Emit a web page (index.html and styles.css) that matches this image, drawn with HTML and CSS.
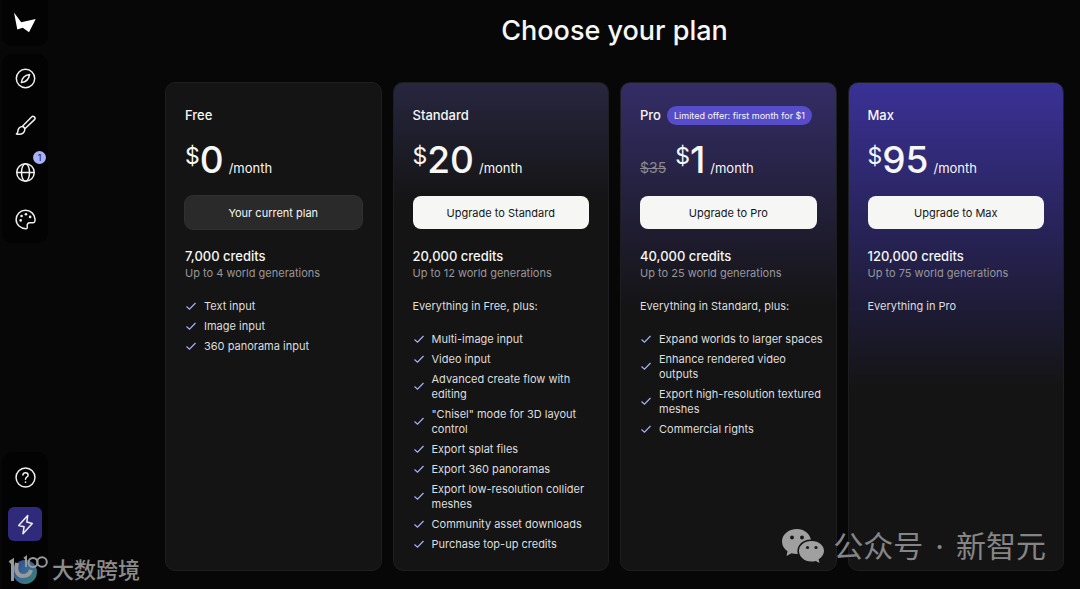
FILE: index.html
```html
<!DOCTYPE html>
<html lang="en">
<head>
    <meta charset="UTF-8">
    <meta name="viewport" content="width=device-width, initial-scale=1.0">
    <title>Choose your plan</title>
    <link rel="stylesheet" href="styles.css">
</head>
<body>

    <!-- shared check mark -->
    <svg class="sprite" aria-hidden="true">
        <symbol id="check" viewBox="0 0 12 12"><path d="M1.500 5.500l3 2.700 6-6.200"/></symbol>
    </svg>

    <aside class="sidebar">
        <a class="logo" href="#" aria-label="Home">
            <svg viewBox="0 0 24 24"><path d="M1 1.500 8.200 11.300 22.700 8 16 21.300 9.800 16.800 4.300 18.500z"/></svg>
        </a>

        <nav class="side-group">
            <button class="side-btn" aria-label="Explore">
                <svg class="icon" viewBox="0 0 24 24"><circle cx="12" cy="12" r="10.5"/><path d="M16.7 7.3c-.6 4.8-3.6 8.6-9.4 9.4.6-5.2 4-8.8 9.4-9.4z"/></svg>
            </button>
            <button class="side-btn" aria-label="Create">
                <svg class="icon" viewBox="0 0 24 24"><path d="M8.8 12.6 18.9 2.4a2.2 2.2 0 0 1 3.4 2.9L11.6 15.4M8.8 12.6l2.8 2.8M9.8 13.7c2.2 2.2 1.6 5.2-.6 7-2 1.6-5 1.5-7.6 1 2.3-1.2 1.3-3.4 2.3-5.6 1.1-2.5 3.9-3.6 5.9-2.4z"/></svg>
            </button>
            <button class="side-btn" aria-label="Worlds">
                <svg class="icon" viewBox="0 0 24 24"><circle cx="12" cy="12" r="10"/><ellipse cx="12" cy="12" rx="4.6" ry="10"/><path d="M2 12h20"/></svg>
                <span class="count">1</span>
            </button>
            <button class="side-btn" aria-label="Styles">
                <svg class="icon" viewBox="0 0 24 24"><path d="M12.5 22.5c1.6.2 1.8-1.3 1.5-2.5-.5-2.6.8-4.3 3.2-4.2h3.2c1.7 0 2.7-1.8 2.5-4.2C22.5 6 18 1.5 12 1.5S1.3 6 1.3 12s5 10.3 11.2 10.5z"/><g class="dots"><circle cx="6.5" cy="13" r="1.5"/><circle cx="7.5" cy="8" r="1.5"/><circle cx="12.5" cy="6" r="1.5"/><circle cx="17.3" cy="9" r="1.5"/></g></svg>
            </button>
        </nav>

        <nav class="side-group side-bottom">
            <button class="side-btn" aria-label="Help">
                <svg class="icon" viewBox="0 0 24 24"><circle cx="12" cy="12" r="10.8"/><path d="M9 9.2c.3-3.4 6-3.4 6 .2 0 2-3 2.2-3 4.6"/><g class="dots"><circle cx="12" cy="17.2" r="1"/></g></svg>
            </button>
            <button class="side-btn active" aria-label="Upgrade">
                <svg class="icon" viewBox="0 0 24 24"><path d="M14.5 1.8 4.2 13.2l6.2 1.3-1.3 8L19.8 10.8l-6.3-1.6z"/></svg>
            </button>
        </nav>
    </aside>

    <main>
        <h1>Choose your plan</h1>

        <div class="plans">
            <section class="card">
                <div class="plan-head"><h2>Free</h2></div>
                <div class="price"><span class="currency">$</span><span class="amount">0</span><span class="period">/month</span></div>
                <button class="btn btn-current">Your current plan</button>
                <h3>7,000 credits</h3>
                <p class="worlds">Up to 4 world generations</p>
                <ul>
                    <li><svg><use href="#check"/></svg><span>Text input</span></li>
                    <li><svg><use href="#check"/></svg><span>Image input</span></li>
                    <li><svg><use href="#check"/></svg><span>360 panorama input</span></li>
                </ul>
            </section>

            <section class="card standard">
                <div class="plan-head"><h2>Standard</h2></div>
                <div class="price"><span class="currency">$</span><span class="amount">20</span><span class="period">/month</span></div>
                <button class="btn">Upgrade to Standard</button>
                <h3>20,000 credits</h3>
                <p class="worlds">Up to 12 world generations</p>
                <p class="includes">Everything in Free, plus:</p>
                <ul>
                    <li><svg><use href="#check"/></svg><span>Multi-image input</span></li>
                    <li><svg><use href="#check"/></svg><span>Video input</span></li>
                    <li><svg><use href="#check"/></svg><span>Advanced create flow with editing</span></li>
                    <li><svg><use href="#check"/></svg><span>"Chisel" mode for 3D layout control</span></li>
                    <li><svg><use href="#check"/></svg><span>Export splat files</span></li>
                    <li><svg><use href="#check"/></svg><span>Export 360 panoramas</span></li>
                    <li><svg><use href="#check"/></svg><span>Export low-resolution collider meshes</span></li>
                    <li><svg><use href="#check"/></svg><span>Community asset downloads</span></li>
                    <li><svg><use href="#check"/></svg><span>Purchase top-up credits</span></li>
                </ul>
            </section>

            <section class="card pro">
                <div class="plan-head"><h2>Pro</h2><span class="offer">Limited offer: first month for $1</span></div>
                <div class="price"><s>$35</s><span class="currency">$</span><span class="amount">1</span><span class="period">/month</span></div>
                <button class="btn">Upgrade to Pro</button>
                <h3>40,000 credits</h3>
                <p class="worlds">Up to 25 world generations</p>
                <p class="includes">Everything in Standard, plus:</p>
                <ul>
                    <li><svg><use href="#check"/></svg><span>Expand worlds to larger spaces</span></li>
                    <li><svg><use href="#check"/></svg><span>Enhance rendered video<br>outputs</span></li>
                    <li><svg><use href="#check"/></svg><span>Export high-resolution textured meshes</span></li>
                    <li><svg><use href="#check"/></svg><span>Commercial rights</span></li>
                </ul>
            </section>

            <section class="card max">
                <div class="plan-head"><h2>Max</h2></div>
                <div class="price"><span class="currency">$</span><span class="amount">95</span><span class="period">/month</span></div>
                <button class="btn">Upgrade to Max</button>
                <h3>120,000 credits</h3>
                <p class="worlds">Up to 75 world generations</p>
                <p class="includes">Everything in Pro</p>
            </section>
        </div>
    </main>

    <div class="mark mark-left" lang="zh">
        <svg viewBox="0 0 40 30">
            <defs>
                <linearGradient id="globe" x1="0" y1="0" x2="1" y2="1">
                    <stop offset="0" stop-color="#39418a"/>
                    <stop offset=".5" stop-color="#356b98"/>
                    <stop offset="1" stop-color="#3b8269"/>
                </linearGradient>
            </defs>
            <circle cx="17" cy="17" r="12" fill="url(#globe)"/>
            <g fill="none" stroke="#999">
                <path d="M1.5 7.500 4.500 5.500V26" stroke-width="3"/>
                <path d="M9 8c-2 7 0 13 6 13 4 0 7-2 8-6" stroke-width="4"/>
                <path d="M16 3.5 18 2v10" stroke-width="2"/>
                <circle cx="25" cy="7.5" r="4.5" stroke-width="2"/>
                <circle cx="34" cy="7" r="4.8" stroke-width="2"/>
            </g>
        </svg>
        <span>大数跨境</span>
    </div>

    <div class="mark mark-right" lang="zh">
        <svg viewBox="0 0 42 34">
            <path fill="#a0a0a0" d="M15 0C6.5 0 0 5.500 0 12.500c0 4 2 7.500 5.500 9.800L4.500 27l5-2.700c2 .6 4 .9 6.200.8C14 17 20 10.500 29 10.600 27.500 4.500 22 0 15 0z"/>
            <path fill="#a0a0a0" d="M29.500 12C22 12 17 16.500 17 22s5 10.500 12.500 10.500c1.500 0 3-.2 4.300-.6l3.700 2-.9-3.600C39.600 28.300 42 25.500 42 22c0-5.500-5-10-12.500-10z"/>
            <g fill="#1a1a1a"><circle cx="10" cy="8.5" r="2"/><circle cx="20" cy="8.5" r="2"/><circle cx="25.5" cy="18.5" r="1.6"/><circle cx="34" cy="18.5" r="1.6"/></g>
        </svg>
        <div class="mark-text"><span>公众号</span><span>·</span><span>新智元</span></div>
    </div>

</body>
</html>
```
FILE: styles.css
```css
:root {
    --bg-main: #070707;
    --bg-side: #030303;
    --bg-card: #141414;
    --border-color: #1e1e20;
    --text-primary: #f7f7f5;
    --text-feature: #dededf;
    --text-muted: #98979c;
    --accent: #a9b1f7;
}

* { box-sizing: border-box; margin: 0; padding: 0; font-family: Inter, "Noto Sans CJK SC", sans-serif; }
body { background: var(--bg-main); color: var(--text-primary); min-height: 100vh; display: flex; position: relative; }
button { border: none; cursor: pointer; }
.sprite { display: none; }

.sidebar { width: 48px; padding-left: 2px; display: flex; flex-direction: column; flex: none; }
.logo { height: 46px; background: var(--bg-side); border-radius: 0 0 10px 10px; display: flex; align-items: center; justify-content: center; margin-bottom: 8px; }
.logo svg { width: 24px; height: 24px; fill: #fff; }
.side-group { background: var(--bg-side); border-radius: 10px; padding: 7px 0; display: flex; flex-direction: column; align-items: center; gap: 13px; }
.side-bottom { margin-top: auto; padding: 8px 0 48px; border-radius: 10px 10px 0 0; }
.side-btn { width: 34px; height: 34px; border-radius: 6px; background: transparent; display: flex; align-items: center; justify-content: center; position: relative; }
.side-btn.active { background: #2f2a7b; }
.icon { width: 21px; height: 21px; fill: none; stroke: #f0f0f0; stroke-width: 1.7; stroke-linejoin: round; stroke-linecap: round; }
.icon .dots { fill: #f0f0f0; stroke: none; }
.count { position: absolute; top: -4px; right: -4px; width: 13px; height: 13px; border-radius: 50%; background: var(--accent); color: #16163a; font-size: 9px; line-height: 13px; text-align: center; }

main { flex: 1; padding: 12px 16px 18px 117px; display: flex; flex-direction: column; }
h1 { font-size: 27px; line-height: 38px; font-weight: 500; text-align: center; margin-bottom: 32px; }

.plans { flex: 1; display: grid; grid-template-columns: repeat(4, minmax(0, 1fr)); gap: 11px; }
.card { background: var(--bg-card); border: 1px solid var(--border-color); border-radius: 10px; padding: 22px 19px 18px; }
.standard { background: linear-gradient(#27263f, var(--bg-card) 120px); }
.pro { background: linear-gradient(#342d66, var(--bg-card) 225px); }
.max { background: linear-gradient(#3a3196, var(--bg-card) 305px); }

.plan-head { display: flex; align-items: center; gap: 6px; height: 20px; margin-bottom: 17px; }
h2 { font-size: 13px; line-height: 20px; font-weight: 500; }
.offer { background: #574dcb; border-radius: 10px; padding: 0 7px; font-size: 9px; line-height: 19px; white-space: nowrap; }

.price { display: flex; align-items: baseline; height: 36px; margin-bottom: 18px; }
.price s { font-size: 14px; color: #89888f; margin-right: 9px; }
.currency { align-self: flex-start; font-size: 23px; line-height: 28px; }
.amount { font-size: 37px; line-height: 36px; font-weight: 500; }
.period { font-size: 13px; margin-left: 5px; }

.btn { width: 100%; height: 33px; border-radius: 8px; background: #f6f6f4; color: #151515; font-size: 11px; }
.btn-current { background: #2a2a2a; color: var(--text-primary); box-shadow: 0 0 0 1px #303030; }

h3 { font-size: 13px; line-height: 18px; font-weight: 500; margin-top: 18px; }
.worlds { font-size: 11px; line-height: 16px; color: var(--text-muted); }
.includes { font-size: 11px; line-height: 15px; margin-top: 18px; color: var(--text-feature); }

/* long features may run a little into the card padding */
ul { list-style: none; display: flex; flex-direction: column; gap: 5px; margin: 18px -14px 0 0; }
li { display: flex; align-items: center; gap: 7px; font-size: 11px; line-height: 15px; color: var(--text-feature); }
li svg { width: 12px; height: 12px; flex: none; fill: none; stroke: var(--accent); stroke-width: 1.2; }

/* overlay marks on top of the page */
.mark { position: absolute; display: flex; align-items: center; white-space: nowrap; pointer-events: none; }
.mark-left { left: 8px; bottom: 4px; gap: 4px; color: #8c8c8c; font-size: 22px; line-height: 30px; font-weight: 500; }
.mark-left svg { width: 40px; height: 30px; }
.mark-right { right: 34px; bottom: 23px; gap: 9px; color: #858585; font-size: 30px; line-height: 40px; }
.mark-right svg { width: 42px; height: 34px; }
.mark-text { display: flex; gap: 12px; }
```
